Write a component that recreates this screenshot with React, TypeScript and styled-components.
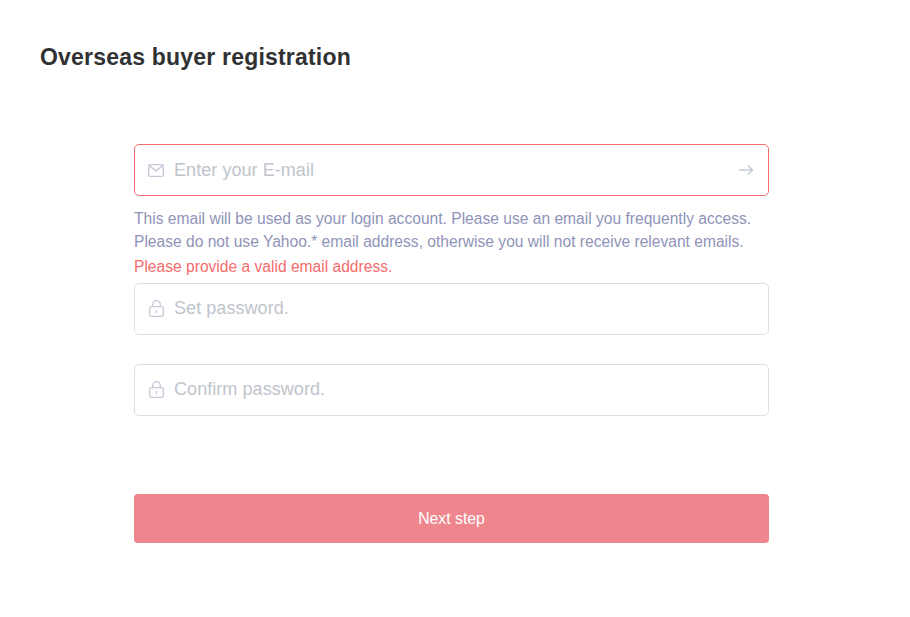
import React from 'react';
import styled, { createGlobalStyle } from 'styled-components';

const GlobalStyle = createGlobalStyle`
  html, body {
    margin: 0;
    padding: 0;
    background: #fff;
    font-family: "Liberation Sans", Arial, sans-serif;
  }
`;

const Page = styled.div`
  width: 910px;
  height: 617px;
  overflow: hidden;
  box-sizing: border-box;
  padding: 43px 40px 0;
`;

const Heading = styled.h1`
  margin: 0;
  font-size: 23px;
  line-height: 28px;
  font-weight: 700;
  letter-spacing: 0.2px;
  color: #303133;
`;

const Form = styled.form`
  width: 635px;
  margin: 73px 0 0 94px;
`;

const Field = styled.div<{ $error?: boolean }>`
  height: 52px;
  box-sizing: border-box;
  display: flex;
  align-items: center;
  padding: 0 13px;
  border: 1px solid ${(p) => (p.$error ? '#f56c6c' : '#dcdfe6')};
  border-radius: 5px;
  background: #fff;
`;

const IconSlot = styled.span`
  width: 17px;
  height: 18px;
  flex: none;
  margin-right: 9px;
  display: flex;
  color: #c4cad6;
`;

const ArrowSlot = styled(IconSlot)`
  margin-right: 2px;
`;

const TextInput = styled.input`
  flex: 1;
  min-width: 0;
  border: 0;
  outline: 0;
  padding: 0;
  background: transparent;
  font-family: inherit;
  font-size: 18px;
  letter-spacing: 0.06px;
  color: #303133;

  &::placeholder {
    color: #c0c4cc;
    opacity: 1;
  }
`;

const PasswordInput = styled(TextInput)`
  padding-bottom: 2px;
`;

const Hint = styled.p`
  margin: 11px 0 0;
  font-size: 15.6px;
  line-height: 23px;
  color: #8f94b8;
`;

const ErrorText = styled.p`
  margin: 2px 0 5px;
  font-size: 15.6px;
  line-height: 23px;
  color: #f56c6c;
`;

const PasswordGroup = styled.div`
  display: flex;
  flex-direction: column;
  gap: 29px;
`;

const SubmitButton = styled.button`
  display: block;
  width: 100%;
  height: 49px;
  margin-top: 78px;
  border: 0;
  border-radius: 4px;
  background: #ef868d;
  color: #fff;
  font-family: inherit;
  font-size: 15.8px;
`;

const MailIcon = () => (
  <svg width="17" height="18" viewBox="0 0 17 18" fill="none" stroke="currentColor" strokeWidth="1.3">
    <rect x="0.7" y="3.7" width="14.6" height="11.6" rx="1.2" />
    <path d="M1.2 4.5l6.8 5.6 6.8-5.6" />
  </svg>
);

const LockIcon = () => (
  <svg width="17" height="18" viewBox="0 0 17 18" fill="none" stroke="currentColor" strokeWidth="1.3">
    <rect x="1.7" y="6.7" width="13.6" height="9.6" rx="1.6" />
    <path d="M4.7 6.7V4.4a3.8 3.8 0 0 1 7.6 0v2.3" />
    <path d="M8.5 10v3" />
  </svg>
);

const ArrowIcon = () => (
  <svg width="17" height="18" viewBox="0 0 17 18" fill="none" stroke="currentColor" strokeWidth="1.5">
    <path d="M3 9h13.5" />
    <path d="M12 4.5L16.5 9 12 13.5" />
  </svg>
);

const App = () => {
  return (
    <Page>
      <GlobalStyle />
      <Heading>Overseas buyer registration</Heading>
      <Form>
        <Field $error>
          <IconSlot><MailIcon /></IconSlot>
          <TextInput placeholder="Enter your E-mail" />
          <ArrowSlot><ArrowIcon /></ArrowSlot>
        </Field>
        <Hint>
          This email will be used as your login account. Please use an email you frequently access.
          <br />
          Please do not use Yahoo.* email address, otherwise you will not receive relevant emails.
        </Hint>
        <ErrorText>Please provide a valid email address.</ErrorText>
        <PasswordGroup>
          <Field>
            <IconSlot><LockIcon /></IconSlot>
            <PasswordInput type="password" placeholder="Set password." />
          </Field>
          <Field>
            <IconSlot><LockIcon /></IconSlot>
            <PasswordInput type="password" placeholder="Confirm password." />
          </Field>
        </PasswordGroup>
        <SubmitButton type="button">Next step</SubmitButton>
      </Form>
    </Page>
  );
};

export default App;
